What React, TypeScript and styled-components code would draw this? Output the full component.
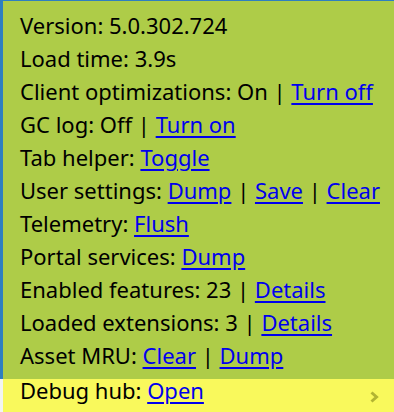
import React from 'react';
import styled, { createGlobalStyle } from 'styled-components';

const GlobalStyle = createGlobalStyle`
	html, body {
		margin: 0;
		padding: 0;
		background: #f2f4f2;
	}
	body {
		font-family: "Noto Sans", "Open Sans", sans-serif;
	}
`;

type Action = { label: string };
type Row = { label: string; value?: string; actions?: Action[] };

const rows: Row[] = [
	{ label: 'Version', value: '5.0.302.724' },
	{ label: 'Load time', value: '3.9s' },
	{ label: 'Client optimizations', value: 'On', actions: [{ label: 'Turn off' }] },
	{ label: 'GC log', value: 'Off', actions: [{ label: 'Turn on' }] },
	{ label: 'Tab helper', actions: [{ label: 'Toggle' }] },
	{ label: 'User settings', actions: [{ label: 'Dump' }, { label: 'Save' }, { label: 'Clear' }] },
	{ label: 'Telemetry', actions: [{ label: 'Flush' }] },
	{ label: 'Portal services', actions: [{ label: 'Dump' }] },
	{ label: 'Enabled features', value: '23', actions: [{ label: 'Details' }] },
	{ label: 'Loaded extensions', value: '3', actions: [{ label: 'Details' }] },
	{ label: 'Asset MRU', actions: [{ label: 'Clear' }, { label: 'Dump' }] },
];

const InfoLine = ({ row }: { row: Row }) => {
	const parts: React.ReactNode[] = [];
	if (row.value) parts.push(<span key="v">{row.value}</span>);
	(row.actions || []).forEach((a, i) => {
		if (parts.length) parts.push(<Sep key={`s${i}`}> | </Sep>);
		parts.push(
			<Link key={`a${i}`} href="#">
				{a.label}
			</Link>
		);
	});
	return (
		<Line>
			{row.label}: {parts}
		</Line>
	);
};

const App = () => {
	return (
		<>
			<GlobalStyle />
			<Panel>
				<InfoList>
					{rows.map((r) => (
						<InfoLine key={r.label} row={r} />
					))}
				</InfoList>
			</Panel>
			<HubRow>
				<HubLine>
					Debug hub: <Link href="#">Open</Link>
				</HubLine>
				<Chevron viewBox="0 0 10 12" aria-hidden>
					<path d="M2.5 1.5 L7.5 6 L2.5 10.5" fill="none" stroke="#b2b432" strokeWidth="3" />
				</Chevron>
			</HubRow>
		</>
	);
};

const Panel = styled.div`
	background: #aecc48;
	border-top: 1px solid #2e7fc0;
	border-left: 3px solid #2e7fc0;
	height: 379px;
	box-sizing: border-box;
	padding: 8px 0 0 17px;
`;

const InfoList = styled.div`
	display: flex;
	flex-direction: column;
`;

const Line = styled.div`
	font-size: 22px;
	line-height: 33px;
	color: #000;
	white-space: nowrap;
`;

const HubLine = styled(Line)`
	line-height: 22px;
	align-self: flex-start;
`;

const Sep = styled.span`
	color: #000;
`;

const Link = styled.a`
	color: #0000ee;
	text-decoration: underline;
	text-underline-offset: 3px;
`;

const HubRow = styled.div`
	margin-left: 3px;
	height: 33px;
	background: #f9f95c;
	display: flex;
	align-items: center;
	justify-content: space-between;
	padding: 0 15px 0 17px;
	box-sizing: border-box;
`;

const Chevron = styled.svg`
	width: 10px;
	height: 12px;
	margin-top: 3px;
`;

export default App;
